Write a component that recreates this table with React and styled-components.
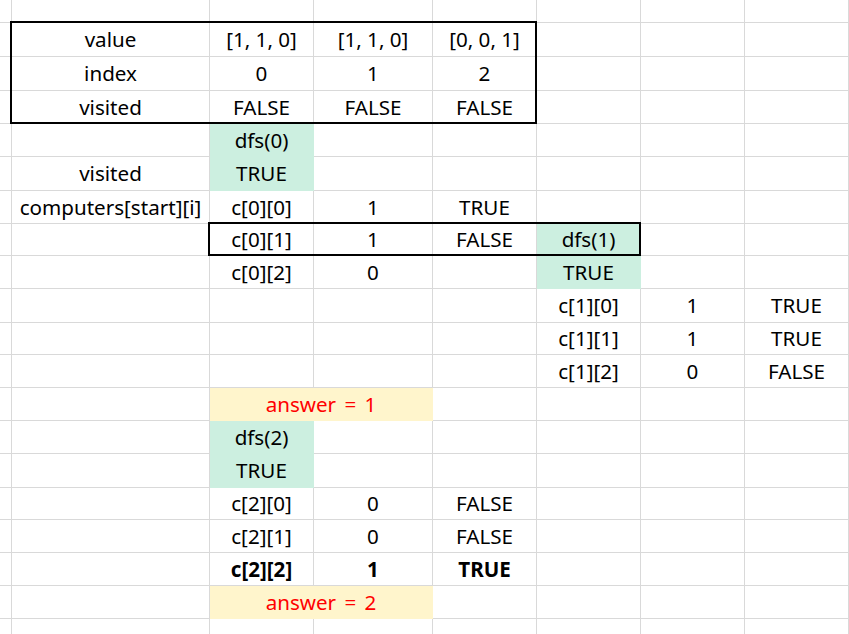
import React from "react";
import styled, { createGlobalStyle } from "styled-components";

const GlobalStyle = createGlobalStyle`
  html, body {
    margin: 0;
    padding: 0;
    background: #ffffff;
  }
  body {
    font-family: "Noto Sans", "Open Sans", sans-serif;
    overflow: hidden;
  }
`;

// measured column / row sizes (each includes its 1px gridline)
const COLS = [12, 198, 104, 119, 104, 104, 104, 104];
const ROWS = [23, 34, 34, 33, 33, 34, 33, 32, 33, 34, 32, 33, 33, 33, 34, 32, 33, 33, 33, 16];

const Sheet = styled.div`
  display: grid;
  grid-template-columns: ${COLS.map((c) => `${c}px`).join(" ")};
  grid-template-rows: ${ROWS.map((r) => `${r}px`).join(" ")};
  width: 849px;
  height: 634px;
  overflow: hidden;
  background: #ffffff;
`;

const fills = {
  green: "#ccefe0",
  yellow: "#fff5cc",
};

const Cell = styled.div`
  grid-row: ${(p) => p.$row + 1};
  grid-column: ${(p) => p.$col + 1} / span ${(p) => p.$span || 1};
  box-sizing: border-box;
  display: flex;
  align-items: center;
  justify-content: center;
  white-space: nowrap;
  font-size: 20.6px;
  line-height: 1;
  word-spacing: ${(p) => (p.$red ? "3px" : "normal")};
  color: ${(p) => (p.$red ? "#ff0000" : "#000000")};
  font-weight: ${(p) => (p.$bold ? 700 : 400)};
  background: ${(p) => (p.$fill ? fills[p.$fill] : "transparent")};
  border-right: 1px solid ${(p) => (p.$fill ? fills[p.$fill] : "#d9d9d9")};
  border-bottom: 1px solid ${(p) => (p.$fill ? fills[p.$fill] : "#d9d9d9")};
`;

const Range = styled.div`
  grid-row: ${(p) => p.$row + 1} / span ${(p) => p.$rows};
  grid-column: ${(p) => p.$col + 1} / span ${(p) => p.$cols};
  margin: -2px 0 0 -2px;
  border: 2px solid #000000;
  box-sizing: border-box;
  pointer-events: none;
  z-index: 1;
`;

// [row, col, text, options]
const cells = [
  [1, 1, "value"], [1, 2, "[1, 1, 0]"], [1, 3, "[1, 1, 0]"], [1, 4, "[0, 0, 1]"],
  [2, 1, "index"], [2, 2, "0"], [2, 3, "1"], [2, 4, "2"],
  [3, 1, "visited"], [3, 2, "FALSE"], [3, 3, "FALSE"], [3, 4, "FALSE"],
  [4, 2, "dfs(0)", { fill: "green" }],
  [5, 1, "visited"], [5, 2, "TRUE", { fill: "green" }],
  [6, 1, "computers[start][i]"], [6, 2, "c[0][0]"], [6, 3, "1"], [6, 4, "TRUE"],
  [7, 2, "c[0][1]"], [7, 3, "1"], [7, 4, "FALSE"], [7, 5, "dfs(1)", { fill: "green" }],
  [8, 2, "c[0][2]"], [8, 3, "0"], [8, 5, "TRUE", { fill: "green" }],
  [9, 5, "c[1][0]"], [9, 6, "1"], [9, 7, "TRUE"],
  [10, 5, "c[1][1]"], [10, 6, "1"], [10, 7, "TRUE"],
  [11, 5, "c[1][2]"], [11, 6, "0"], [11, 7, "FALSE"],
  [12, 2, "answer = 1", { fill: "yellow", red: true, span: 2 }],
  [13, 2, "dfs(2)", { fill: "green" }],
  [14, 2, "TRUE", { fill: "green" }],
  [15, 2, "c[2][0]"], [15, 3, "0"], [15, 4, "FALSE"],
  [16, 2, "c[2][1]"], [16, 3, "0"], [16, 4, "FALSE"],
  [17, 2, "c[2][2]", { bold: true }], [17, 3, "1", { bold: true }], [17, 4, "TRUE", { bold: true }],
  [18, 2, "answer = 2", { fill: "yellow", red: true, span: 2 }],
];

const buildGrid = () => {
  const taken = {};
  const out = [];
  cells.forEach(([row, col, text, opt = {}]) => {
    const span = opt.span || 1;
    for (let i = 0; i < span; i++) taken[`${row}-${col + i}`] = true;
    out.push(
      <Cell
        key={`${row}-${col}`}
        $row={row}
        $col={col}
        $span={span}
        $fill={opt.fill}
        $red={opt.red}
        $bold={opt.bold}
      >
        {text}
      </Cell>
    );
  });
  ROWS.forEach((_, row) => {
    COLS.forEach((__, col) => {
      if (!taken[`${row}-${col}`]) {
        out.push(<Cell key={`${row}-${col}`} $row={row} $col={col} />);
      }
    });
  });
  return out;
};

const App = () => {
  return (
    <>
      <GlobalStyle />
      <Sheet>
        {buildGrid()}
        <Range $row={1} $col={1} $rows={3} $cols={4} />
        <Range $row={7} $col={2} $rows={1} $cols={4} />
      </Sheet>
    </>
  );
};

export default App;
